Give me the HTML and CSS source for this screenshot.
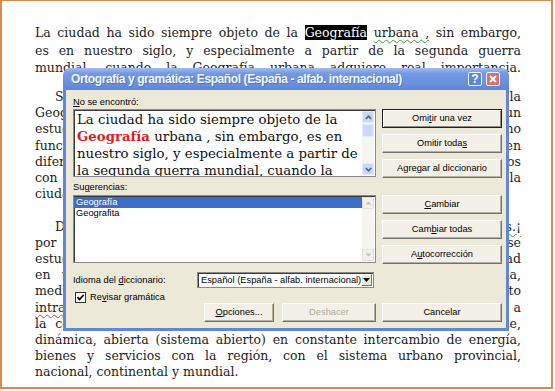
FILE: index.html
```html
<!DOCTYPE html>
<html lang="es">
<head>
    <meta charset="UTF-8">
    <title>Ortografía y gramática</title>
    <link rel="stylesheet" href="styles.css">
</head>
<body>
<div class="page">
    <p class="par lead">
        <span class="ln">La ciudad ha sido siempre objeto de la <span class="sel">Geografía</span> <span class="gram">urbana ,</span> sin embargo,</span>
        <span class="ln">es en nuestro siglo, y especialmente a partir de la segunda guerra</span>
        <span class="ln">mundial, cuando la Geografía urbana adquiere real importancia.</span>
    </p>
    <p class="par">
        <span class="ln first">Si bien al comienzo se estudió la localización de las ciudades y la</span>
        <span class="ln">Geografía se ocupó de su emplazamiento y situación, luego surge un</span>
        <span class="ln">estudio que considera a la ciudad como un organismo vivo y no</span>
        <span class="ln">funcional, analizando los usos del suelo urbano y sus cambios en</span>
        <span class="ln">diferentes etapas históricas, así como los diversos procesos</span>
        <span class="ln">con los que la sociedad transforma su espacio y construye la</span>
        <span class="ln end">ciudad en la que vive.</span>
    </p>
    <p class="par">
        <span class="ln first">De esta forma surgen nuevas corrientes y diversos <span class="gram">enfoques.¡</span></span>
        <span class="ln">por ejemplo, la ciudad es considerada como un espacio en el que se</span>
        <span class="ln">estudian los problemas y la calidad de vida dentro de la ciudad</span>
        <span class="ln">en un contexto de crecimiento y cambio de la estructura urbana,</span>
        <span class="ln">mediante el análisis de la segregación y del crecimiento</span>
        <span class="ln"><span class="spell">intraurbano</span> y de la movilidad de la población, lo que lleva a</span>
        <span class="ln">la consideración de la ciudad como una entidad compleja, cambiante,</span>
        <span class="ln">dinámica, abierta (sistema abierto) en constante intercambio de energía,</span>
        <span class="ln">bienes y servicios con la región, con el sistema urbano provincial,</span>
        <span class="ln end">nacional, continental y mundial.</span>
    </p>

    <div class="dlg">
        <div class="titlebar">
            <span class="title-text">Ortografía y gramática: Español (España - alfab. internacional)</span>
            <span class="tbtn help">?</span>
            <span class="tbtn close">
                <svg width="8" height="8" viewBox="0 0 8 8"><path d="M1 1 L7 7 M7 1 L1 7" stroke="#fff" stroke-width="1.8" fill="none"/></svg>
            </span>
        </div>
        <div class="body">
            <div class="lbl"><u>N</u>o se encontró:</div>
            <div class="row">
                <div class="textbox">
                    <div class="tb-text">La ciudad ha sido siempre objeto de la<br><b class="err">Geografía</b> urbana , sin embargo, es en<br>nuestro siglo, y especialmente a partir de<br>la segunda guerra mundial, cuando la</div>
                    <div class="sb">
                        <div class="sb-btn up"><svg width="7" height="5" viewBox="0 0 7 5"><path d="M0.8 4 L3.5 1.2 L6.2 4" stroke="#4d6185" stroke-width="1.5" fill="none"/></svg></div>
                        <div class="sb-thumb"></div>
                        <div class="sb-btn down"><svg width="7" height="5" viewBox="0 0 7 5"><path d="M0.8 1 L3.5 3.8 L6.2 1" stroke="#4d6185" stroke-width="1.5" fill="none"/></svg></div>
                    </div>
                </div>
                <div class="btns">
                    <div class="btn default">Omi<u>t</u>ir una vez</div>
                    <div class="btn">Omitir toda<u>s</u></div>
                    <div class="btn">Agre<u>g</u>ar al diccionario</div>
                </div>
            </div>
            <div class="lbl sug">Su<u>g</u>erencias:</div>
            <div class="row">
                <div class="list">
                    <div class="item active">Geografía</div>
                    <div class="item">Geografita</div>
                    <div class="sb off">
                        <div class="sb-btn up"><svg width="7" height="4" viewBox="0 0 7 4"><path d="M0.5 3.5 L3.5 0.5 L6.5 3.5 Z" fill="#c4c2b6"/></svg></div>
                        <div class="sb-btn down"><svg width="7" height="4" viewBox="0 0 7 4"><path d="M0.5 0.5 L3.5 3.5 L6.5 0.5 Z" fill="#c4c2b6"/></svg></div>
                    </div>
                </div>
                <div class="btns">
                    <div class="btn"><u>C</u>ambiar</div>
                    <div class="btn">Cam<u>b</u>iar todas</div>
                    <div class="btn">A<u>u</u>tocorrección</div>
                </div>
            </div>
            <div class="lang-row">
                <span class="lang-lbl">Idioma del <u>d</u>iccionario:</span>
                <div class="select">
                    <span class="select-text">Español (España - alfab. internacional)</span>
                    <span class="dd"><svg width="7" height="4" viewBox="0 0 7 4"><path d="M0 0 L7 0 L3.5 4 Z" fill="#000"/></svg></span>
                </div>
            </div>
            <div class="check-row">
                <span class="check"><svg width="9" height="9" viewBox="0 0 9 9"><path d="M1.5 4.2 L3.6 6.4 L7.6 2" stroke="#000" stroke-width="1.7" fill="none"/></svg></span>
                <span>Re<u>v</u>isar gramática</span>
            </div>
            <div class="bottom-row">
                <div class="btn opt"><u>O</u>pciones...</div>
                <div class="btn undo disabled">Deshacer</div>
                <div class="btn cancel">Cancelar</div>
            </div>
        </div>
    </div>
</div>
</body>
</html>
```

FILE: styles.css
```css
* {
    box-sizing: border-box;
}
body {
    margin: 0;
    background: #fff;
}
.page {
    position: relative;
    width: 553px;
    height: 389px;
    border: 2px solid #d98a4e;
    border-top-width: 1px;
    padding: 23px 30px 0 33px;
    font-family: "DejaVu Serif", serif;
    font-size: 12.5px;
    line-height: 16.2px;
    color: #1e1e1e;
}
.par {
    margin: 0 0 16.2px;
}
.par.lead {
    line-height: 17.6px;
    margin-bottom: 12.2px;
}
.ln {
    display: block;
    text-align: justify;
    text-align-last: justify;
}
.ln.first {
    text-indent: 20px;
}
.ln.end {
    text-align-last: left;
}
.sel {
    background: #000;
    color: #fff;
}
.gram {
    text-decoration: underline wavy #3f9e3f;
    text-decoration-thickness: 1px;
    text-underline-offset: 2px;
}
.spell {
    text-decoration: underline wavy #e23a3a;
    text-decoration-thickness: 1px;
    text-underline-offset: 2px;
}

/* dialog */
.dlg {
    position: absolute;
    left: 61px;
    top: 67px;
    width: 446px;
    font-family: "Liberation Sans", Arial, sans-serif;
    font-size: 9.3px;
    line-height: 13px;
    color: #000;
}
.titlebar {
    height: 22px;
    border-radius: 7px 7px 0 0;
    background: linear-gradient(#a3bdf0, #7499e2 25%, #6a91de 70%, #5f86d6);
    display: flex;
    align-items: center;
    padding: 0 9px 0 8px;
}
.title-text {
    flex: 1;
    color: #f3f6fd;
    font-weight: bold;
    font-size: 12px;
    letter-spacing: -0.4px;
    white-space: nowrap;
    text-shadow: 1px 1px 0 #5674b8;
}
.tbtn {
    width: 14px;
    height: 14px;
    margin-left: 4px;
    border: 1px solid #eef2fb;
    border-radius: 2px;
    display: flex;
    align-items: center;
    justify-content: center;
    color: #fff;
    font-weight: bold;
    font-size: 12px;
}
.help {
    background: #5c88dc;
}
.close {
    background: #d8716c;
}
.body {
    height: 241px;
    background: #ece9d8;
    border: 3px solid #6286d8;
    border-top: 0;
    padding: 6px 4px 0 7px;
}
.lbl {
    height: 13px;
}
.lbl.sug {
    margin-top: 3px;
    height: 14px;
}
.row {
    display: flex;
    gap: 6px;
}
.textbox, .list {
    position: relative;
    width: 303px;
    height: 68px;
    background: #fff;
    border: 1px solid #8a8a8a;
    box-shadow: inset 1px 1px 0 #3c3c3c;
    overflow: hidden;
}
.tb-text {
    padding: 1px 0 0 3px;
    font-family: "DejaVu Serif", serif;
    font-size: 13.3px;
    line-height: 17px;
    white-space: nowrap;
    color: #111;
}
.err {
    color: #e01c1c;
}
.sb {
    position: absolute;
    top: 1px;
    right: 1px;
    bottom: 1px;
    width: 12px;
    background: #f5f4ee;
}
.sb-btn {
    position: absolute;
    left: 0;
    width: 12px;
    height: 12px;
    background: #c8d7f8;
    border: 1px solid #e6edfc;
    border-radius: 2px;
    display: flex;
    align-items: center;
    justify-content: center;
}
.sb-btn.up {
    top: 0;
}
.sb-btn.down {
    bottom: 0;
}
.sb-thumb {
    position: absolute;
    left: 0;
    top: 13px;
    width: 12px;
    height: 13px;
    background: #cbd9f8;
    border: 1px solid #e6edfc;
    border-radius: 2px;
}
.sb.off .sb-btn {
    background: #f1f0ea;
    border-color: #e3e1d8;
}
.item {
    height: 11px;
    line-height: 11px;
    padding-left: 2px;
    margin-right: 13px;
}
.item.active {
    margin-top: 1px;
    background: #3b6dc8;
    color: #fff;
}
.btns {
    width: 120px;
    display: flex;
    flex-direction: column;
    gap: 6px;
}
.btn {
    height: 19px;
    line-height: 17px;
    text-align: center;
    white-space: nowrap;
    background: #f3f1e7;
    border: 1px solid;
    border-color: #fff #74726a #74726a #fff;
    box-shadow: inset -1px -1px 0 #b3b0a3;
}
.btn.default {
    border: 1px solid #222;
    box-shadow: inset 1px 1px 0 #fff, inset -1px -1px 0 #8e8c80;
}
.btn.disabled {
    color: #aeac9e;
}
.lang-row {
    margin-top: 8px;
    height: 16px;
    display: flex;
    align-items: center;
}
.lang-lbl {
    width: 124px;
}
.select {
    width: 177px;
    height: 16px;
    background: #fff;
    border: 1px solid #8a8a8a;
    box-shadow: inset 1px 1px 0 #3c3c3c;
    display: flex;
    align-items: center;
    padding-left: 3px;
}
.select-text {
    flex: 1;
    white-space: nowrap;
}
.dd {
    width: 12px;
    height: 12px;
    margin-right: 1px;
    background: #ece9d8;
    border: 1px solid;
    border-color: #fff #74726a #74726a #fff;
    display: flex;
    align-items: center;
    justify-content: center;
}
.check-row {
    margin-top: 4px;
    height: 11px;
    display: flex;
    align-items: center;
    gap: 4px;
}
.check {
    width: 11px;
    height: 11px;
    margin-left: 2px;
    background: #fff;
    border: 1px solid #333;
    display: flex;
    align-items: center;
    justify-content: center;
}
.bottom-row {
    display: flex;
    justify-content: flex-end;
}
.btn.opt {
    width: 70px;
    margin-right: 8px;
}
.btn.undo {
    width: 94px;
    margin-right: 6px;
}
.btn.cancel {
    width: 120px;
}
```
